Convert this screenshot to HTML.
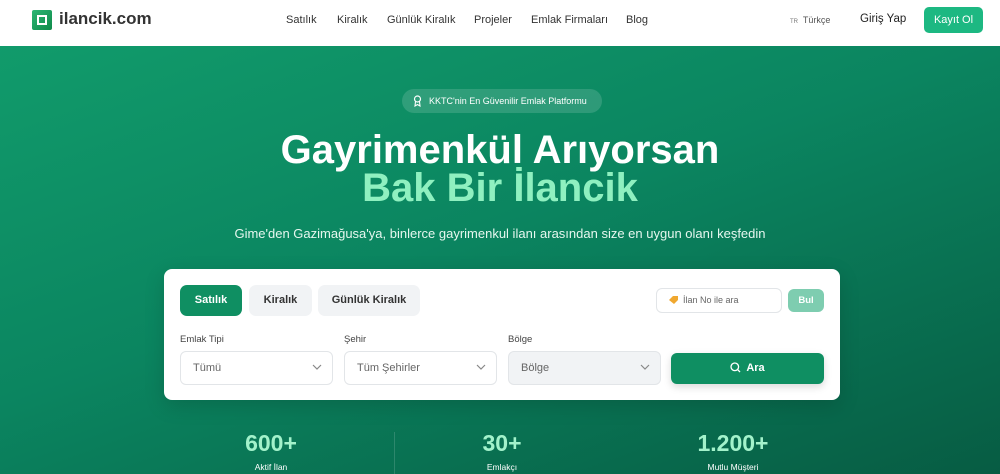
<!DOCTYPE html>
<html><head><meta charset="utf-8"><style>
*{margin:0;padding:0;box-sizing:border-box}
body{width:1000px;height:474px;overflow:hidden;font-family:"Liberation Sans",sans-serif;background:#fff;position:relative}
.nav{position:absolute;left:0;top:0;width:1000px;height:46px;background:#fff;z-index:2}
.logo{position:absolute;left:32px;top:10px;width:20px;height:20px;background:linear-gradient(135deg,#2bb673,#0f8a4a);border-radius:2px}
.logo i{position:absolute;left:5px;top:5px;width:10px;height:10px;border:2px solid #fff}
.brand{position:absolute;left:59px;top:9px;font-size:17px;font-weight:bold;color:#333}
.links a{position:absolute;top:14px;font-size:11px;color:#333;text-decoration:none}
.hero{position:absolute;left:0;top:46px;width:1000px;height:428px;background:linear-gradient(160deg,#119b6b 0%,#0b8560 45%,#075c43 100%)}
.badge{position:absolute;left:402px;top:89px;width:200px;height:24px;border-radius:12px;background:rgba(255,255,255,.14);color:#fff;font-size:9px;line-height:24px;padding-left:27px}
h1{position:absolute;left:0;width:1000px;text-align:center;font-size:40px;font-weight:bold;color:#fff;top:128px}
h2{position:absolute;left:0;width:1000px;text-align:center;font-size:40px;font-weight:bold;color:#8ff0c0;top:166px}
.sub{position:absolute;left:0;width:1000px;text-align:center;font-size:13px;color:#e6f7ef;top:226px}
.card{position:absolute;left:164px;top:269px;width:676px;height:131px;background:#fff;border-radius:8px;box-shadow:0 6px 20px rgba(0,0,0,.15)}
.tab{position:absolute;top:16px;height:31px;border-radius:7px;background:#f1f3f5;font-size:11px;font-weight:bold;color:#333;text-align:center;line-height:31px}
.lbl{position:absolute;top:65px;font-size:9.5px;color:#444}
.sel{position:absolute;top:82px;width:153px;height:34px;border:1px solid #e2e5e8;border-radius:6px;font-size:11px;color:#666;line-height:32px;padding-left:12px}
.sel svg{position:absolute;right:10px;top:12px}
.stat{position:absolute;top:430px;width:200px;text-align:center;color:#fff}
.stat b{display:block;font-size:23px;color:#a3f2cb}
.stat span{display:block;font-size:8.5px;margin-top:5px}
</style></head><body>
<div class="nav">
<div class="logo"><i></i></div><div class="brand">ilancik.com</div>
<div class="links"><a style="left:286px">Satılık</a><a style="left:337px">Kiralık</a><a style="left:387px">Günlük Kiralık</a><a style="left:474px">Projeler</a><a style="left:531px">Emlak Firmaları</a><a style="left:626px">Blog</a></div>
<div style="position:absolute;left:790px;top:15px;font-size:9px;color:#555"><span style="font-size:6px;color:#777">TR</span>&nbsp; Türkçe</div>
<div style="position:absolute;left:860px;top:13px;font-size:11.5px;color:#222">Giriş Yap</div>
<div style="position:absolute;left:924px;top:7px;width:59px;height:26px;border-radius:5px;background:#1db882;color:#fff;font-size:11px;text-align:center;line-height:26px">Kayıt Ol</div>
</div>
<div class="hero"></div>
<div class="badge"><svg style="position:absolute;left:11px;top:6px" width="9" height="12" viewBox="0 0 9 12"><circle cx="4.5" cy="4" r="3" fill="none" stroke="#fff" stroke-width="1.2"/><path d="M2.5 6.5 L2 11 L4.5 9.5 L7 11 L6.5 6.5" fill="none" stroke="#fff" stroke-width="1.1"/></svg>KKTC'nin En Güvenilir Emlak Platformu</div>
<h1>Gayrimenkül Arıyorsan</h1>
<h2>Bak Bir İlancik</h2>
<div class="sub">Gime'den Gazimağusa'ya, binlerce gayrimenkul ilanı arasından size en uygun olanı keşfedin</div>
<div class="card">
<div class="tab" style="left:16px;width:62px;background:#0f8f62;color:#fff">Satılık</div>
<div class="tab" style="left:85px;width:63px">Kiralık</div>
<div class="tab" style="left:154px;width:102px">Günlük Kiralık</div>
<div style="position:absolute;left:492px;top:19px;width:126px;height:25px;border:1px solid #e2e5e8;border-radius:6px;font-size:9px;color:#666;line-height:23px;padding-left:26px"><svg style="position:absolute;left:11px;top:7px" width="10" height="9" viewBox="0 0 10 9"><path d="M1 4 L5 0 L10 0 L10 4 L6 8 Z" fill="#f0a830"/></svg>İlan No ile ara</div>
<div style="position:absolute;left:624px;top:20px;width:36px;height:23px;border-radius:6px;background:#7ecdb0;color:#fff;font-size:9.5px;font-weight:bold;text-align:center;line-height:23px">Bul</div>
<div class="lbl" style="left:16px">Emlak Tipi</div>
<div class="lbl" style="left:180px">Şehir</div>
<div class="lbl" style="left:344px">Bölge</div>
<div class="sel" style="left:16px">Tümü<svg width="10" height="6" viewBox="0 0 10 6"><path d="M1 1 L5 5 L9 1" fill="none" stroke="#888" stroke-width="1.2"/></svg></div>
<div class="sel" style="left:180px">Tüm Şehirler<svg width="10" height="6" viewBox="0 0 10 6"><path d="M1 1 L5 5 L9 1" fill="none" stroke="#888" stroke-width="1.2"/></svg></div>
<div class="sel" style="left:344px;background:#f1f3f5">Bölge<svg width="10" height="6" viewBox="0 0 10 6"><path d="M1 1 L5 5 L9 1" fill="none" stroke="#888" stroke-width="1.2"/></svg></div>
<div style="position:absolute;left:507px;top:84px;width:153px;height:31px;border-radius:6px;background:#0f8f62;color:#fff;font-size:11px;font-weight:bold;text-align:center;line-height:31px;box-shadow:0 3px 8px rgba(0,0,0,.15)"><svg style="vertical-align:-2px;margin-right:5px" width="11" height="11" viewBox="0 0 11 11"><circle cx="4.8" cy="4.8" r="3.8" fill="none" stroke="#fff" stroke-width="1.3"/><path d="M7.6 7.6 L10 10" stroke="#fff" stroke-width="1.3"/></svg>Ara</div>
</div>
<div class="stat" style="left:171px"><b>600+</b><span>Aktif İlan</span></div>
<div style="position:absolute;left:394px;top:432px;width:1px;height:42px;background:rgba(255,255,255,.15)"></div>
<div class="stat" style="left:402px"><b>30+</b><span>Emlakçı</span></div>
<div class="stat" style="left:633px"><b>1.200+</b><span>Mutlu Müşteri</span></div>
</body></html>
